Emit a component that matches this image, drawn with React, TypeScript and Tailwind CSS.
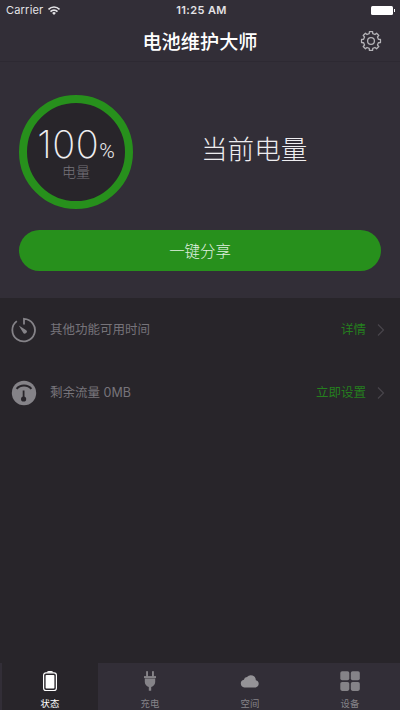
import React, { useState } from 'react';

interface Tab {
  id: string;
  label: string;
  icon: React.ReactNode;
}

interface InfoRow {
  id: string;
  label: string;
  action: string;
  icon: React.ReactNode;
}

const GearIcon = () => {
  // 8 teeth, four corners per tooth
  const points: string[] = [];
  for (let i = 0; i < 8; i++) {
    const corners = [[-13.5, 7.6], [-9.5, 9.6], [9.5, 9.6], [13.5, 7.6]];
    corners.forEach(([offset, r]) => {
      const a = ((i * 45 + offset - 90) * Math.PI) / 180;
      points.push(`${(11 + r * Math.cos(a)).toFixed(2)},${(11 + r * Math.sin(a)).toFixed(2)}`);
    });
  }

  return (
    <svg className="w-[22px] h-[22px]" viewBox="0 0 22 22" fill="none" stroke="#b4b3b7" strokeWidth="1.3" strokeLinejoin="round">
      <polygon points={points.join(' ')} />
      <circle cx="11" cy="11" r="3.4" />
    </svg>
  );
};

const WifiIcon = () => (
  <svg className="w-3 h-[9px]" viewBox="0 0 12 9" fill="none" stroke="#e4e3e6" strokeWidth="1.6">
    <path d="M0.5 3.4a7.6 7.6 0 0 1 11 0" />
    <path d="M2.5 5.6a4.9 4.9 0 0 1 7 0" />
    <path d="M6 9L4.1 7.1a2.6 2.6 0 0 1 3.8 0z" fill="#e4e3e6" stroke="none" />
  </svg>
);

const TimerIcon = () => (
  <svg className="w-[26px] h-[26px]" viewBox="0 0 26 26" fill="none" stroke="#858388" strokeWidth="1.8">
    <path d="M5.8 4.1A11.3 11.3 0 1 0 13 1.8V7.4" />
    <path d="M7.8 8.4L14.9 12.9A2 2 0 1 1 12 15.5z" fill="#858388" stroke="none" />
  </svg>
);

const GaugeIcon = () => (
  <svg className="w-[26px] h-[26px]" viewBox="0 0 26 26" fill="none">
    <circle cx="13" cy="13" r="12.2" fill="#858388" />
    <path d="M5.6 8.8C9.2 4.3 16.8 4.3 20.4 8.8" stroke="#28252a" strokeWidth="2" />
    <path d="M12.6 10.5V18" stroke="#28252a" strokeWidth="1.8" />
    <circle cx="12.6" cy="19" r="2.6" fill="#28252a" />
  </svg>
);

const ChevronIcon = () => (
  <svg className="w-2 h-3" viewBox="0 0 8 12" fill="none" stroke="#48454b" strokeWidth="1.2">
    <path d="M1 0.5L6.5 6L1 11.5" />
  </svg>
);

const tabs: Tab[] = [
  {
    id: 'status',
    label: '状态',
    icon: (
      <svg className="w-5 h-5" viewBox="0 0 20 20" fill="none">
        <path d="M6.6 1.6Q7 0 8.6 0H11.4Q13 0 13.4 1.6z" fill="#fff" />
        <rect x="3.6" y="1.8" width="12.8" height="17.8" rx="2.4" stroke="#fff" strokeWidth="1.2" />
        <rect x="5.6" y="4" width="8.8" height="13.6" rx="0.8" fill="#fff" />
      </svg>
    ),
  },
  {
    id: 'charge',
    label: '充电',
    icon: (
      <svg className="w-5 h-5" viewBox="0 0 20 20" fill="#858388">
        <rect x="6.1" y="0.2" width="1.9" height="6" />
        <rect x="12" y="0.2" width="1.9" height="6" />
        <rect x="4" y="5.1" width="12" height="2" />
        <path d="M4.8 7.6H15.2V11Q15 14.6 11.2 16V19.8H8.8V16Q5 14.6 4.8 11z" />
      </svg>
    ),
  },
  {
    id: 'space',
    label: '空间',
    icon: (
      <svg className="w-5 h-5" viewBox="0 0 20 20" fill="#959397">
        <path d="M4.4 16.4A3.9 3.9 0 0 1 3.9 8.7A3.1 3.1 0 0 1 7 6.1A5 5 0 0 1 15.9 9.2A3.7 3.7 0 0 1 15.8 16.4z" />
      </svg>
    ),
  },
  {
    id: 'device',
    label: '设备',
    icon: (
      <svg className="w-5 h-5" viewBox="0 0 20 20" fill="#858388">
        <rect x="0.3" y="0.3" width="9" height="9" rx="1.8" />
        <rect x="10.8" y="0.3" width="9" height="9" rx="1.8" />
        <rect x="0.3" y="10.9" width="9" height="9" rx="1.8" />
        <rect x="10.8" y="10.9" width="9" height="9" rx="1.8" />
      </svg>
    ),
  },
];

const rows: InfoRow[] = [
  { id: 'time', label: '其他功能可用时间', action: '详情', icon: <TimerIcon /> },
  { id: 'traffic', label: '剩余流量 0MB', action: '立即设置', icon: <GaugeIcon /> },
];

const App: React.FC = () => {
  const [activeTab, setActiveTab] = useState('status');

  return (
    <div className="w-[400px] h-[710px] flex flex-col overflow-hidden bg-[#28252a] font-['Inter','Noto_Sans_CJK_SC',sans-serif]">
      {/* Status bar */}
      <div className="h-5 shrink-0 grid grid-cols-3 items-center pl-1.5 pr-[5px] bg-[#322e37] text-[11px] text-[#e4e3e6]">
        <div className="flex items-center gap-[5px]">
          <span className="tracking-[0.2px]">Carrier</span>
          <WifiIcon />
        </div>
        <span className="pl-0.5 text-center font-semibold whitespace-nowrap tracking-[0.4px]">11:25 AM</span>
        <div className="flex items-center justify-end gap-px">
          <div className="w-[22px] h-[9px] rounded-[1.5px] bg-white"></div>
          <div className="w-px h-[3px] bg-white"></div>
        </div>
      </div>

      {/* Header */}
      <div className="h-[42px] shrink-0 grid grid-cols-[1fr_auto_1fr] items-center bg-[#322e37] border-b border-[#2d2932]">
        <span></span>
        <h1 className="pt-0.5 text-[19.2px] leading-[40px] font-medium text-white">电池维护大师</h1>
        <button className="justify-self-end mr-[18px]">
          <GearIcon />
        </button>
      </div>

      {/* Battery summary */}
      <div className="h-[236px] shrink-0 px-[19px] pt-[33px] bg-[#322e37]">
        <div className="flex items-center">
          <div className="w-[114px] h-[114px] rounded-full border-8 border-[#27901c] bg-[#28252a] flex flex-col items-center pt-[25px]">
            <div className="flex items-baseline text-[#eeedf0] leading-[32px] whitespace-nowrap">
              <span className="text-[38px] font-extralight tracking-[0.5px]">100</span>
              <span className="text-[21px] leading-none font-['Roboto',sans-serif] font-light">%</span>
            </div>
            <span className="mt-px text-[14px] leading-[18px] font-light text-[#77747a]">电量</span>
          </div>
          <h2 className="ml-[68px] -mt-1.5 text-[26.6px] leading-[36px] font-light text-[#eeedf0]">当前电量</h2>
        </div>
        <button className="mt-[21px] w-[362px] h-[41px] pt-0.5 rounded-full bg-[#27901c] text-[15.4px] text-[#e2f0e1] font-light">
          一键分享
        </button>
      </div>

      {/* Info rows */}
      <div className="flex-1">
        {rows.map((row) => (
          <div key={row.id} className="h-[63px] flex items-center pl-[11px] pr-[15px] text-[12.5px]">
            {row.icon}
            <span className="ml-[13px] pt-0.5 flex-1 text-[#77747a]">{row.label}</span>
            <span className="pt-0.5 text-[#257f1e]">{row.action}</span>
            <span className="ml-[11px]">
              <ChevronIcon />
            </span>
          </div>
        ))}
      </div>

      {/* Tab bar */}
      <nav className="h-[47px] shrink-0 grid grid-cols-4 bg-[#322e37]">
        {tabs.map((tab) => (
          <button
            key={tab.id}
            onClick={() => setActiveTab(tab.id)}
            className={`flex flex-col items-center pt-2 ${
              activeTab === tab.id ? 'ml-[2px] mr-[2px] bg-[#28252a] text-white' : 'text-[#858388]'
            }`}
          >
            {tab.icon}
            <span className="mt-1.5 text-[9.4px] leading-[14px]">{tab.label}</span>
          </button>
        ))}
      </nav>
    </div>
  );
};

export default App;
